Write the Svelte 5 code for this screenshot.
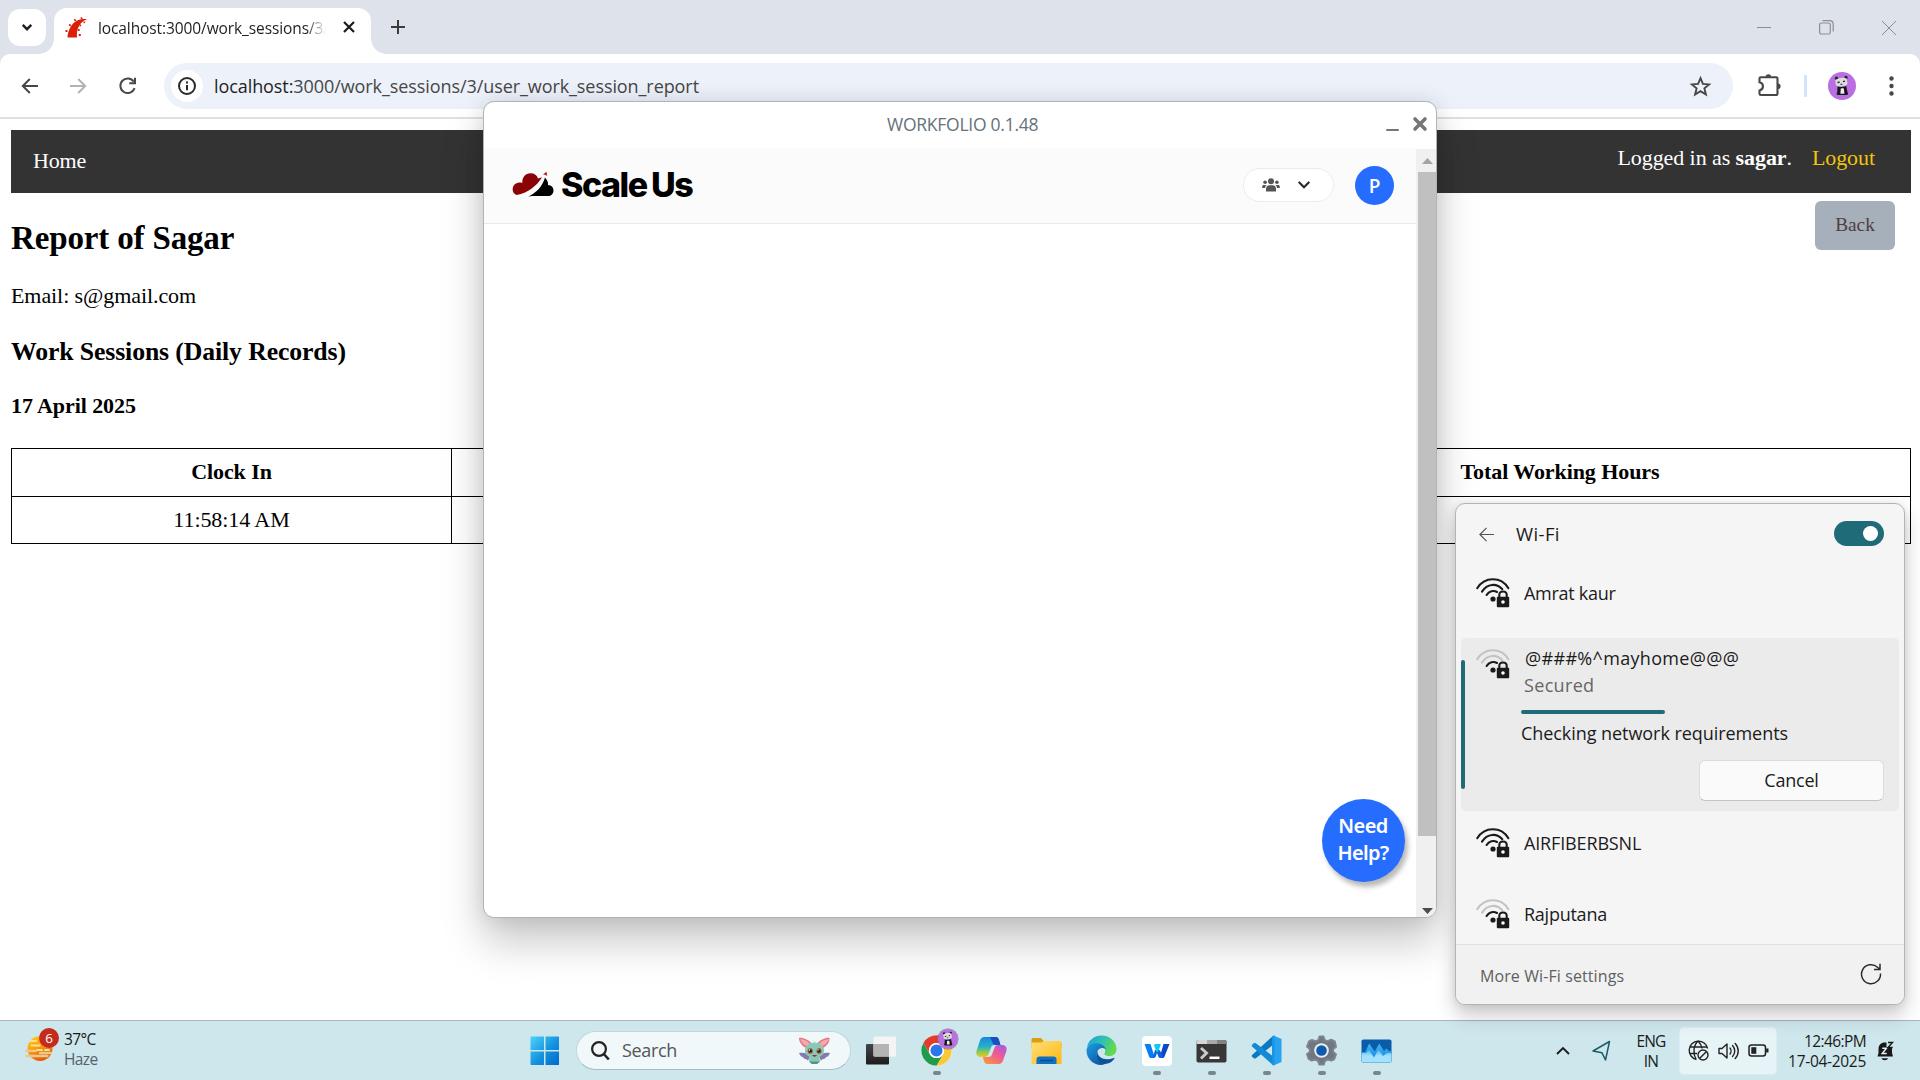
<script>
  const path = '/work_sessions/3/user_work_session_report';
  const before = [{ ssid: 'Amrat kaur', weak: false, cls: 'amrat' }];
  const after = [
    { ssid: 'AIRFIBERBSNL', weak: false, cls: 'air' },
    { ssid: 'Rajputana', weak: true, cls: 'raj' }
  ];
</script>

{#snippet wifi(weak)}
  <svg class="wifi-icon" width="34" height="31" viewBox="0 0 34 31" fill="none" stroke="#1a1a1a" stroke-width="2.1" stroke-linecap="round">
    <path d="M1.2 11.2C8.5-.5 25-.9 32.4 11.2" stroke={weak ? '#c3c3c3' : '#1a1a1a'} />
    <path d="M6 14.6C11.2 6.2 21 6 26.3 12.2" stroke={weak ? '#c3c3c3' : '#1a1a1a'} />
    <path d="M10.6 18C13 13.9 17.6 13.2 21 15" />
    <circle cx="17" cy="22" r="2.6" fill="#1a1a1a" stroke="none" />
    <path d="M23.3 21v-3c0-4.6 7.4-4.6 7.4 0v3" />
    <rect x="20.8" y="19.8" width="12.4" height="10.4" rx="1" fill="#1a1a1a" stroke="none" />
    <circle cx="27" cy="25" r="1.8" fill="#fff" stroke="none" />
  </svg>
{/snippet}

{#snippet panda(size)}
  <svg width={size} height={size} viewBox="0 0 28 28">
    <circle cx="14" cy="14" r="14" fill="#b96ee2" />
    <circle cx="8.5" cy="6.2" r="1.6" fill="#222" /><circle cx="18" cy="5.4" r="1.6" fill="#222" />
    <path d="M7.3 8.2c2.5-2.6 8.8-3.4 11.4-1.4l.8 5c-1.8 3-9.7 3.8-11.6 1.3z" fill="#ddd" />
    <path d="M9.5 10.500l2.200-.4M15 9.600l2-.5" stroke="#222" stroke-width="1.300" />
    <path d="M12.4 12.2l2 .2" stroke="#222" stroke-width="1" />
    <path d="M9.5 14.6c3 .8 6.3.5 8.7-.6l1.3 6.2c1 1 .6 2.8-1 2.8H10.2c-2 0-2-1.800-1-2.600z" fill="#181818" />
    <path d="M12.700 16.800c1-.6 2.500-.6 3.200 0l.5 5h-4z" fill="#eee" />
  </svg>
{/snippet}

<div class="screen">
  <div class="tabstrip">
    <div class="tab-search">
      <svg width="12" height="9" viewBox="0 0 14 10" fill="none" stroke="#1f1f1f" stroke-width="2.800"><path d="M2 2l5 5 5-5" /></svg>
    </div>
    <div class="tab">
      <svg class="favicon" width="23" height="21" viewBox="0 0 23 21" fill="#d91f06">
        <path d="M2.500 20.500C2.800 12.500 8 3.200 16.200 2.200c2-.2 3.600-.2 5.800.2C15.500 3.800 11 11.500 12 20.500z" />
        <rect x="0.500" y="13" width="2" height="2" /><rect x="4" y="7.300" width="2" height="1.700" transform="rotate(35 5 8)" />
        <rect x="9" y="2.200" width="2.300" height="1.600" transform="rotate(50 10 3)" /><rect x="15.500" y="0" width="2" height="1.500" transform="rotate(30 16 1)" />
        <rect x="18.500" y="4.500" width="1.600" height="1.600" /><rect x="14.500" y="7.500" width="1.600" height="1.800" /><rect x="13" y="12" width="1.600" height="2" /><rect x="13.800" y="17" width="2" height="2" />
      </svg>
      <span class="tab-title">localhost:3000/work_sessions/3/</span>
      <svg width="12" height="12" viewBox="0 0 12 12" stroke="#1b1b1b" stroke-width="2.200"><path d="M1 1l10 10M11 1L1 11" /></svg>
    </div>
    <svg class="plus" width="14" height="14" viewBox="0 0 14 14" stroke="#3c3c3c" stroke-width="2"><path d="M7 0v14M0 7h14" /></svg>
    <div class="win-controls">
      <svg width="14" height="14" viewBox="0 0 14 14" stroke="#8b8e93" fill="none"><path d="M0 6.500h14" /></svg>
      <svg width="15" height="15" viewBox="0 0 15 15" stroke="#8b8e93" fill="none" stroke-width="1.200"><rect x=".6" y="3" width="10.700" height="11" rx="1.800" /><path d="M3.500.6h7c2.200 0 3.700 1.400 3.700 3.600v7.200" /></svg>
      <svg width="14" height="14" viewBox="0 0 14 14" stroke="#8b8e93" fill="none"><path d="M0 0l14 14M14 0L0 14" /></svg>
    </div>
  </div>

  <div class="toolbar-wrap">
    <div class="toolbar">
      <svg width="17" height="16" viewBox="0 0 17 16" fill="none" stroke="#474747" stroke-width="2"><path d="M17 8H1.800M8.800 1L1.800 8l7 7" /></svg>
      <svg class="fwd" width="17" height="16" viewBox="0 0 17 16" fill="none" stroke="#b3b3b3" stroke-width="2"><path d="M0 8h15.200M8.200 1l7 7-7 7" /></svg>
      <svg class="reload" width="18" height="18" viewBox="0 0 18 18" fill="none" stroke="#474747" stroke-width="2"><path d="M15.600 11.200a7.300 7.300 0 1 1-.9-6.600M16 .8V6.200H10.300" /></svg>
      <div class="address">
        <div class="info">
          <svg width="18" height="18" viewBox="0 0 18 18" fill="none" stroke="#2a2a2a" stroke-width="2"><circle cx="9" cy="9" r="8" /><path d="M9 8v5.300M9 4.600v2" /></svg>
        </div>
        <span class="url"><span class="host">localhost:</span>3000{path}</span>
        <svg class="star" width="21" height="20" viewBox="0 0 21 20" fill="none" stroke="#474747" stroke-width="1.900"><path d="M10.500 2.200l2.400 5.700 6.200.5-4.700 4 1.500 6.100-5.400-3.300-5.400 3.300 1.500-6.100-4.700-4 6.200-.5z" /></svg>
      </div>
      <svg class="ext" width="23" height="23" viewBox="0 0 23 23" fill="none" stroke="#474747" stroke-width="2.100"><path d="M1.500 4.500c0-1 .5-1.300 1.300-1.300H18c1 0 1.500.5 1.500 1.400v14.900c0 1-.5 1.500-1.500 1.500H3c-1 0-1.500-.5-1.500-1.300v-3.200c4.600-1 4.600-7.300 0-8.300z" /><path d="M7.600 2.800a2.800 2.600 0 0 1 5.600 0zM20 9.500a2.600 2.800 0 0 1 0 5.600z" fill="#474747" stroke="none" /></svg>
      <i class="divider"></i>
      <div class="profile">{@render panda(28)}</div>
      <svg class="menu" width="5" height="20" viewBox="0 0 5 20" fill="#474747"><circle cx="2.500" cy="2.500" r="2.200" /><circle cx="2.500" cy="10" r="2.200" /><circle cx="2.500" cy="17.500" r="2.200" /></svg>
    </div>
  </div>

  <main>
    <nav>
      <span class="home">Home</span>
      <span class="who">Logged in as <b>sagar</b>.</span>
      <span class="logout">Logout</span>
    </nav>
    <div class="report">
      <div class="left">
        <h2>Report of Sagar</h2>
        <p>Email: s@gmail.com</p>
        <h3>Work Sessions (Daily Records)</h3>
        <h4>17 April 2025</h4>
      </div>
      <button class="back">Back</button>
    </div>
    <div class="table">
      <div class="cell head">Clock In</div><div class="cell head"></div><div class="cell head last">Total Working Hours</div>
      <div class="cell">11:58:14 AM</div><div class="cell"></div><div class="cell last"></div>
    </div>
  </main>

  <footer class="taskbar">
    <div class="weather">
      <div class="haze">
        <svg width="29" height="27" viewBox="0 0 29 27">
          <defs><linearGradient id="sun" x1="0" y1="0" x2=".5" y2="1"><stop offset="0" stop-color="#ffd11a" /><stop offset=".5" stop-color="#f8a013" /><stop offset="1" stop-color="#e35a08" /></linearGradient></defs>
          <circle cx="15" cy="13.500" r="12.500" fill="url(#sun)" />
          <path d="M6 6h5M6.500 10.500h8M19 10.500h6M12 15h5M20 15h4" stroke="#ffe08a" stroke-width="2" stroke-linecap="round" />
          <path d="M1 15.800h10M1.500 21h21M15 18h11" stroke="#ecc98a" stroke-width="2.300" stroke-linecap="round" />
        </svg>
        <span class="badge">6</span>
      </div>
      <div class="temp"><span>37°C</span><span class="dim">Haze</span></div>
    </div>

    <div class="apps">
      <svg width="30" height="30" viewBox="0 0 30 30">
        <defs><linearGradient id="win" x1="0" y1="0" x2="1" y2="1"><stop offset="0" stop-color="#4cd2fb" /><stop offset=".55" stop-color="#1591e0" /><stop offset="1" stop-color="#0069cb" /></linearGradient></defs>
        <path d="M1 .5h13v13.500H.500V1zM15.500.5h13l.5.5v13H15.500zM.500 15.500H14V29H1l-.5-.5zM15.500 15.500H29v13l-.5.5h-13z" fill="url(#win)" />
      </svg>
      <div class="search">
        <svg width="19" height="20" viewBox="0 0 19 20" fill="none" stroke="#222" stroke-width="2.200"><circle cx="8" cy="8" r="6.900" /><path d="M12.800 13l5 5.500" stroke-width="2.600" /></svg>
        <span>Search</span>
        <svg class="bat" width="33" height="28" viewBox="0 0 33 28">
          <path d="M1 16c4-1 8 0 11 3l-2 5c-1-3-4-1-5-4-2 0-3-2-4-4zM32 16c-4-1-8 0-11 3l2 5c1-3 4-1 5-4 2 0 3-2 4-4z" fill="#8678b0" />
          <path d="M10 12C5 10 1 6 1 .800 6 .6 11 3 14 7zM23 12c5-2 9-6 8.500-11.200C26.500.6 22 3 19 7z" fill="#e57584" />
          <path d="M10 10C6 8 3 5 2 2c4 .5 8 2 10 5zM23 10c4-2 7-5 8-8-4 .5-8 2-10 5z" fill="#f6a8ad" />
          <path d="M7 14c0-5.500 4-8.500 9.500-8.500S26 8.500 26 14c0 3-2 4.500-4.500 5.500l.5 5-3 2.500h-5l-3-2.500.5-5C9 18.500 7 17 7 14z" fill="#87c9b6" />
          <ellipse cx="12.200" cy="14" rx="2.500" ry="2.700" fill="#8c4a28" /><ellipse cx="21" cy="14" rx="2.500" ry="2.700" fill="#8c4a28" />
          <circle cx="12.500" cy="14" r="1.300" fill="#201010" /><circle cx="20.700" cy="14" r="1.300" fill="#201010" /><circle cx="11.500" cy="13" r=".7" fill="#fff" /><circle cx="20" cy="13" r=".7" fill="#fff" />
          <path d="M14.300 18h4.600c-.5 2.200-4 2.200-4.600 0z" fill="#a32c35" /><path d="M15 3l1.500 4 1.500-3 .5 3" fill="#b4e0d0" />
          <path d="M11 24.500l3 2.500h5l3-2.500" fill="#56947f" />
        </svg>
      </div>
      <svg class="taskview" width="31" height="29" viewBox="0 0 31 29">
        <defs><linearGradient id="tv" x1="0" y1="0" x2="0" y2="1"><stop offset="0" stop-color="#454545" /><stop offset="1" stop-color="#1c1c1c" /></linearGradient></defs>
        <rect x="0" y="8" width="23" height="20.500" rx="1" fill="url(#tv)" /><rect x="7.500" y=".5" width="22.500" height="20" rx="1" fill="#f4f4f4" /><path d="M7.500 8H23v12.500H8.500l-1-1z" fill="#b4b4b4" />
      </svg>
      <div class="app run">
        <svg width="31" height="31" viewBox="0 0 48 48">
          <circle cx="24" cy="24" r="23.500" fill="#fff" />
          <path d="M3.650 12.250A23.500 23.500 0 0 1 44.350 12.250H24A11.750 11.750 0 0 0 13.820 29.870z" fill="#e33b2e" />
          <path d="M44.350 12.250A23.500 23.500 0 0 1 24 47.500L34.180 29.870A11.750 11.750 0 0 0 24 12.250z" fill="#fcc934" />
          <path d="M24 47.500A23.500 23.500 0 0 1 3.650 12.250L13.820 29.870A11.750 11.750 0 0 0 34.180 29.870z" fill="#209a4b" />
          <circle cx="24" cy="24" r="11.800" fill="#fff" /><circle cx="24" cy="24" r="9.300" fill="#2b76e8" />
        </svg>
        <span class="mini">{@render panda(20)}</span>
      </div>
      <div class="app">
        <svg width="31" height="29" viewBox="0 0 31 29">
          <defs>
            <linearGradient id="cpa" x1="0" y1="0" x2="0" y2="1"><stop offset="0" stop-color="#1b86dc" /><stop offset=".5" stop-color="#27b3c6" /><stop offset=".75" stop-color="#8fc94e" /><stop offset="1" stop-color="#f2c820" /></linearGradient>
            <linearGradient id="cpb" x1="1" y1="0" x2=".2" y2="1"><stop offset="0" stop-color="#a058ee" /><stop offset=".5" stop-color="#ec5b95" /><stop offset="1" stop-color="#fb9440" /></linearGradient>
          </defs>
          <path d="M8.500 1h11c2.200 0 3 1 3.500 3l1.500 5h-6c-2 0-3 1-3.500 2.800L12.500 18c-.6 2-1.500 3-4 3H5c-3.500 0-5.500-2.500-4.500-6L3.800 5C4.600 2.200 6 1 8.500 1z" fill="url(#cpa)" />
          <path d="M14 1h5.500c2.200 0 3 1 3.500 3l1.500 5h-5c-2 0-2.600-1-3.200-3z" fill="#174fc7" />
          <path d="M22.500 28h-11c-2.200 0-3-1-3.500-3l-1.200-4h5.700c2 0 3-1 3.500-2.800l2.500-6.400c.6-2 1.500-2.800 4-2.800H26c3.500 0 5.300 2.500 4.400 6L27.200 24c-.8 2.800-2.200 4-4.700 4z" fill="url(#cpb)" />
        </svg>
      </div>
      <div class="app">
        <svg width="31" height="28" viewBox="0 0 31 28">
          <defs><linearGradient id="fold" x1="0" y1="0" x2="1" y2="1"><stop offset="0" stop-color="#ffe07a" /><stop offset="1" stop-color="#fdb710" /></linearGradient></defs>
          <path d="M.500 2.500Q.500 1 2 1h8l3 3.500h16Q30.500 4.500 30.500 6v5H.500z" fill="#de9d0b" /><path d="M.500 5.500h10l2.500-1.500h16q1.500 0 1.500 1.500V27H.500z" fill="url(#fold)" />
          <path d="M5.500 27v-4.500q0-3 3-3h14q3 0 3 3V27z" fill="#0f6fc0" /><path d="M9 23.500h13" stroke="#0a4a86" stroke-width="1.300" />
        </svg>
      </div>
      <div class="app">
        <svg width="31" height="31" viewBox="0 0 31 31">
          <defs>
            <linearGradient id="edg" x1="0" y1="0" x2="1" y2=".4"><stop offset="0" stop-color="#1f9ee0" /><stop offset=".55" stop-color="#2fc1b4" /><stop offset="1" stop-color="#62d94f" /></linearGradient>
            <linearGradient id="edb" x1="0" y1="0" x2=".8" y2="1"><stop offset="0" stop-color="#1da0e2" /><stop offset="1" stop-color="#0c4f9e" /></linearGradient>
          </defs>
          <path d="M1 12C2.500 5 8.500.500 15.500.500 24 .500 30.500 6.500 30.500 14c0 4.500-3.300 7-7 7-3.600 0-5.500-1.300-5-2.500 2-3.500.5-8-5-9C8.500 8.700 3.500 9.500 1 12z" fill="url(#edg)" />
          <path d="M.500 15.500C.700 10.500 5.500 8.200 10.500 8.200c6 0 9.500 4 9.500 7.300 0-2.500-6-4.500-8.500.5-2.800 6 2.500 12 9.500 11.500-1.500 1.500-3.500 2.500-6 2.500C7 30 .5 23.500.5 15.500z" fill="url(#edb)" />
          <path d="M11.500 16c-2.500 5.500 1.500 13.500 9 12.800 4-.5 6.800-3.300 8-5.300.3-.6-.2-.9-.8-.6C20 26 11 23.500 11.500 16z" fill="#0b5299" />
        </svg>
      </div>
      <div class="app run">
        <svg width="30" height="30" viewBox="0 0 30 30">
          <rect width="30" height="30" rx="4" fill="#fff" /><path d="M2.500 8h6l4 12.500q-.5 1.500-2 1.500h-1.500q-1.500 0-2-1.500z" fill="#087ff0" /><path d="M27.500 8h-6l-4 14h3q1.500 0 2-1.500z" fill="#0949c8" /><path d="M13 14h4.500l3.500 6q-.5 2-2 2h-.8q-1.200 0-1.700-1.200L15 17l-1.500 4q-.6 1-1.700 1h-1z" fill="#0a64e2" /><path d="M11.500 8q1 1 2 0h4.500q1 0 .6 1.200L16 16h-1.500z" fill="#12c7f6" />
        </svg>
      </div>
      <div class="app run">
        <svg width="31" height="24" viewBox="0 0 31 24">
          <rect x=".5" y="1" width="30" height="22.500" rx="1.800" fill="#373737" /><path d="M.500 2.800Q.500 1 2.300 1H11v4H.500z" fill="#d6d6d6" /><path d="M11 1h10v4H11z" fill="#a9a9a9" /><path d="M21 1h7.700q1.800 0 1.800 1.800V5H21z" fill="#828282" />
          <path d="M5 9l5.500 5L5 19.500" fill="none" stroke="#c9c9c9" stroke-width="3" /><path d="M13.500 18.800h10" stroke="#fff" stroke-width="2.500" />
        </svg>
      </div>
      <div class="app run">
        <svg width="31" height="31" viewBox="0 0 31 31">
          <path d="M22.500.500L30.500 4v23l-8 3.500z" fill="#25a3f1" /><path d="M22.500.500v9L4.500 23.500H3l-2.200-2v-1.200z" fill="#0b78c4" /><path d="M22.500 30.500v-9L4.500 8H3L.800 10v1.200z" fill="#118bd8" /><path d="M21 1.500l2.500-1v30l-2.500-1z" fill="#1c93df" />
        </svg>
      </div>
      <div class="app run">
        <svg width="31" height="31" viewBox="0 0 31 31">
          <path d="M12.500 5l1-3.500h4l1 3.500 2.800 1.400 3.900-1.700 3.500 1.600L30 12l-2.800 2v3l2.800 2.200-1.700 4.800-3 1.500-3.700-1-2.800 1.500-1 3.500h-4.600l-1-3.500-2.800-1.500-4 1-2.700-1.500L1 19l2.800-2v-3L1 11.500l2-5L6 5l3.700 1.400z" fill="#6f7780" stroke="#7d858e" stroke-width="2" stroke-linejoin="round" />
          <circle cx="15.500" cy="15.500" r="7.300" fill="#e9edf0" /><circle cx="15.500" cy="15.500" r="5.300" fill="#0b5cae" />
        </svg>
      </div>
      <div class="app run">
        <svg width="31" height="24" viewBox="0 0 31 24">
          <defs>
            <linearGradient id="tm" x1="0" y1="0" x2="0" y2="1"><stop offset="0" stop-color="#4aaeef" /><stop offset=".5" stop-color="#a4e1fd" /></linearGradient>
            <linearGradient id="tmw" x1="0" y1="0" x2="0" y2="1"><stop offset="0" stop-color="#3fb6f5" /><stop offset="1" stop-color="#1280d6" /></linearGradient>
          </defs>
          <rect x=".5" y=".5" width="30" height="23" rx="1.800" fill="#0a5ba8" />
          <path d="M.500 13h3.700l4-8.500 5.500 8 4.500-8L23 12l2.500-2.500L28 12h2.500v9.500q0 2-2 2H2.500q-2 0-2-2z" fill="url(#tmw)" />
          <path d="M.500 14h4.500L8 11l5 7.500 4.500-8L22 17l4-3h4.500v7.500q0 2-2 2H2.500q-2 0-2-2z" fill="url(#tm)" />
        </svg>
      </div>
    </div>

    <div class="tray">
      <svg class="up" width="14" height="9" viewBox="0 0 14 9" fill="none" stroke="#1b1b1b" stroke-width="1.900"><path d="M1 8l6-6 6 6" /></svg>
      <svg class="loc" width="19" height="21" viewBox="0 0 19 21" fill="none" stroke="#1b5c68" stroke-width="1.500" stroke-linejoin="round"><path d="M17.500 1.500L1 11l9 1.800 3.500 7.200z" /></svg>
      <div class="lang"><span>ENG</span><span>IN</span></div>
      <div class="quick">
        <svg width="21" height="21" viewBox="0 0 21 21" fill="none" stroke="#222" stroke-width="1.400"><path d="M8.500 19.500A9.300 9.300 0 1 1 19.600 8.500M1.500 7h18M1.500 13.500h7.500M8 19C5 14 5 6 10 1c2.500 2.500 3.800 5 4 7.500" /><circle cx="15" cy="15" r="5" /><path d="M11.500 18.500l7-7" /></svg>
        <svg width="21" height="18" viewBox="0 0 21 18" fill="none" stroke="#222" stroke-width="1.400" stroke-linejoin="round"><path d="M1 6.500h3L9 2v14l-5-4.500H1z" /><path d="M12 6c1.300 1.600 1.300 4.400 0 6M14.500 3.500c3 3.200 3 7.800 0 11M17.200 1.500c4 4.200 4 10.800 0 15" stroke-linecap="round" /></svg>
        <svg width="21" height="13" viewBox="0 0 21 13" fill="none" stroke="#222" stroke-width="1.500"><rect x="1" y="1" width="16.500" height="11" rx="2.500" /><rect x="3.300" y="3.200" width="5" height="6.600" fill="#222" stroke="none" /><path d="M19.300 4.500v4" stroke-width="2.400" /></svg>
      </div>
      <div class="clock"><span class="time">12:46:PM</span><span>17-04-2025</span></div>
      <svg class="bell" width="18" height="20" viewBox="0 0 18 20">
        <path d="M1.500 15.500L2.500 12V8c0-4 2.500-6.500 6.500-6.500h1.500V6h5.500v6l1 3.500z" fill="#181818" /><path d="M5.500 17.300h6.500c-.5 2.500-6 2.500-6.500 0z" fill="#181818" />
        <path d="M6.300 7.200h4.200l-4.200 5.200h4.400" fill="none" stroke="#e8f4f7" stroke-width="1.500" /><path d="M12 1.500h4.500L12 6.500h4.700" fill="none" stroke="#181818" stroke-width="1.400" />
      </svg>
    </div>
  </footer>

  <section class="window">
    <header class="titlebar">
      <span class="title">WORKFOLIO 0.1.48</span>
      <svg class="min" width="13" height="2" viewBox="0 0 13 2"><rect width="13" height="2" rx="1" fill="#777" /></svg>
      <svg class="close" width="14" height="14" viewBox="0 0 14 14" stroke="#757575" stroke-width="3.600" stroke-linecap="round"><path d="M2 2l10 10M12 2L2 12" /></svg>
    </header>
    <div class="window-body">
      <div class="content">
        <div class="brandbar">
          <svg class="cloud" width="42" height="28" viewBox="0 0 42 28">
            <path d="M4.500 24C-.500 22.500-.700 14.500 4.500 12.300c1.700-1 3.500-.8 5.800-.3C10 6.500 13.500 2.300 18.500 2.300c4 0 6.500 2 7.500 5.200l4-1.300C25 14.500 17 21.500 4.500 24z" fill="#8c0306" /><path d="M31 3.500l3.500-2.700.7 4.200-2-1.200z" fill="#b3121b" />
            <path d="M14 26.800C24 22.500 30.500 15.500 33 6.500c1.500 1.800 3.500 4.300 3 7.500 3.500.3 5.500 2.500 5.500 5.500 0 3.500-2.500 5.500-5.500 5.500H20c-2 0-4 .8-6 1.800z" fill="#000" />
          </svg>
          <span class="brand">Scale Us</span>
          <div class="team">
            <svg width="18" height="14" viewBox="0 0 18 14" fill="#555"><circle cx="9" cy="3.300" r="3" /><circle cx="3.100" cy="4.200" r="1.800" /><circle cx="14.900" cy="4.200" r="1.800" /><path d="M4 13.500v-2.700C4 8.500 5.500 7.300 7.300 7.300h3.400c1.800 0 3.300 1.200 3.300 3.500v2.700zM.200 10V8.800C.2 7.500 1 7 2 7h2.500C3.500 8 3 9 3 10zM17.800 10V8.800C17.800 7.500 17 7 16 7h-2.500c1 1 1.500 2 1.500 3z" /></svg>
            <svg width="12" height="8" viewBox="0 0 12 8" fill="none" stroke="#2b2b2b" stroke-width="2.200" stroke-linecap="round"><path d="M1.300 1.500L6 6.200l4.700-4.700" /></svg>
          </div>
          <span class="avatar">P</span>
        </div>
      </div>
      <div class="scrollbar">
        <svg width="11" height="6" viewBox="0 0 11 6"><path d="M0 6L5.500 0 11 6z" fill="#a3a3a3" /></svg>
        <i class="thumb"></i>
        <svg class="down" width="11" height="6" viewBox="0 0 11 6"><path d="M0 0l5.500 6L11 0z" fill="#4d4d4d" /></svg>
      </div>
    </div>
    <div class="help"><span>Need</span><span>Help?</span></div>
  </section>

  <aside class="flyout">
    <div class="fly-head">
      <svg width="15" height="15" viewBox="0 0 15 15" fill="none" stroke="#555" stroke-width="1.200"><path d="M15 7.500H1M7.500.800L.900 7.500l6.600 6.700" /></svg>
      <span>Wi-Fi</span>
      <i class="toggle"></i>
    </div>
    {#each before as n}
      <div class="net">{@render wifi(n.weak)}<span class={n.cls}>{n.ssid}</span></div>
    {/each}
    <div class="active">
      <i class="accent"></i>
      <div class="row">{@render wifi(true)}<div class="names"><span>@###%^mayhome@@@</span><span class="sec">Secured</span></div></div>
      <i class="progress"></i>
      <span class="status">Checking network requirements</span>
      <button class="cancel">Cancel</button>
    </div>
    {#each after as n}
      <div class="net {n.cls}-row">{@render wifi(n.weak)}<span class={n.cls}>{n.ssid}</span></div>
    {/each}
    <div class="fly-foot">
      <span>More Wi-Fi settings</span>
      <svg width="22" height="22" viewBox="0 0 22 22" fill="none" stroke="#2b2b2b" stroke-width="1.500"><path d="M20.500 10.500A9.500 9.500 0 1 1 17.500 4.200L20 6.300M20 .800v5.700h-6" /></svg>
    </div>
  </aside>
</div>

<style>
  :global(body) { margin: 0; background: #fff; }
  * { box-sizing: border-box; }
  svg { display: block; flex: none; overflow: visible; }
  i { display: block; flex: none; }
  span { white-space: nowrap; }
  .screen { position: relative; width: 1920px; height: 1080px; overflow: hidden; display: flex; flex-direction: column; background: #fff; font-family: "Open Sans", "Noto Sans", sans-serif; }

  .tabstrip { height: 54px; flex: none; background: #dee2ea; display: flex; align-items: flex-start; padding-left: 8px; }
  .tab-search { margin-top: 9px; width: 38px; height: 37px; border-radius: 12px; background: #fff; display: flex; align-items: center; justify-content: center; }
  .tab { position: relative; margin: 8px 0 0 8px; width: 317px; height: 46px; background: #fff; border-radius: 13px 13px 0 0; display: flex; align-items: center; padding: 0 16px 8px 11px; }
  .tab::before, .tab::after { content: ""; position: absolute; bottom: 0; width: 15px; height: 15px; }
  .tab::before { left: -15px; background: radial-gradient(circle at 0 0, transparent 14.500px, #fff 15px); }
  .tab::after { right: -15px; background: radial-gradient(circle at 100% 0, transparent 14.500px, #fff 15px); }
  .favicon { margin-right: 10px; }
  .tab-title { width: 229px; margin-right: 16px; font-size: 15.500px; letter-spacing: -0.100px; line-height: 24px; padding-top: 1px; color: #1f1f1f; -webkit-mask-image: linear-gradient(90deg, #000 208px, transparent 228px); mask-image: linear-gradient(90deg, #000 208px, transparent 228px); }
  .plus { margin: 20px 0 0 20px; }
  .win-controls { margin-left: auto; display: flex; align-items: center; gap: 48px; padding: 20px 24px 0 0; }

  .toolbar-wrap { flex: none; height: 65px; background: #dee2ea; border-bottom: 2px solid #e0e0e0; }
  .toolbar { height: 63px; background: #fff; border-radius: 10px 10px 0 0; display: flex; align-items: center; padding: 1px 0 0 21px; }
  .fwd { margin-left: 32px; }
  .reload { margin-left: 32px; }
  .address { margin: 0 0 0 27px; width: 1569px; height: 46px; border-radius: 23px; background: #ecf1fa; display: flex; align-items: center; padding: 0 22px 0 7px; }
  .info { width: 32px; height: 32px; border-radius: 50%; background: #fff; display: flex; align-items: center; justify-content: center; }
  .url { margin-left: 11px; font-size: 18px; letter-spacing: -0.080px; color: #474747; line-height: 26px; }
  .host { color: #1f1f1f; }
  .star { margin-left: auto; }
  .ext { margin-left: 25px; margin-top: -2px; }
  .divider { width: 3px; height: 22px; background: #d3e3fd; margin-left: 23px; border-radius: 1px; }
  .profile { margin-left: 21px; }
  .menu { margin-left: 33px; }

  main { flex: 1; padding: 11px 9px 0 11px; font-family: "Liberation Serif", "Times New Roman", serif; font-size: 22px; letter-spacing: -0.080px; color: #000; }
  nav { height: 63px; background: #333; color: #fff; display: flex; line-height: 26px; padding: 17px 36px 0 22px; }
  .home { margin-top: 1px; letter-spacing: -0.200px; }
  .who { margin-left: auto; margin-top: -2px; }
  .logout { color: #f1c40f; margin: -2px 0 0 20px; }
  .report { display: flex; justify-content: space-between; height: 255px; }
  h2, h3, h4, p { margin: 0; }
  h2 { margin-top: 26px; font-size: 33px; line-height: 38px; letter-spacing: -0.150px; }
  p { margin-top: 26px; line-height: 25px; }
  h3 { margin-top: 29px; font-size: 25.740px; line-height: 30px; letter-spacing: -0.110px; }
  h4 { margin-top: 26px; font-size: 22px; line-height: 25px; }
  .back { margin: 8px 16px 0 0; width: 80px; height: 49px; border: 0; border-radius: 6px; background: #a5b0bb; color: #4f3f3f; font: 19.250px "Liberation Serif", serif; padding: 0 0 1px; }
  .table { display: grid; grid-template-columns: 440px 756px 703px; grid-template-rows: 48px 47px; border: solid #000; border-width: 1px 0 0 1px; width: 1900px; }
  .cell { border: solid #000; border-width: 0 1px 1px 0; display: flex; align-items: center; justify-content: center; }
  .head { font-weight: 700; padding-bottom: 2px; }
  .last { padding-left: 2px; }

  .taskbar { height: 60px; flex: none; background: #cee7ed; border-top: 1px solid #a9b5bf; display: grid; grid-template-columns: 530px 1fr auto; }
  .weather { display: flex; padding: 14px 0 0 25px; font-size: 15.500px; }
  .haze { position: relative; width: 29px; height: 27px; }
  .badge { position: absolute; left: 14px; top: -7px; width: 20px; height: 20px; border-radius: 50%; background: #c42b1c; color: #fff; font-size: 13.500px; line-height: 20px; text-align: center; }
  .temp { display: flex; flex-direction: column; margin: -6px 0 0 10px; line-height: 20px; color: #1b1b1b; letter-spacing: -0.600px; }
  .dim { color: #53636a; letter-spacing: -0.600px; }
  .apps { display: flex; align-items: center; padding-bottom: 1px; }
  .search { margin-left: 16px; width: 275px; height: 39px; border-radius: 20px; background: #f0f8fa; border: 1px solid #c2d6dc; border-bottom-color: #a9bbc4; display: flex; align-items: center; padding: 0 19px 0 14px; color: #555; font-size: 18px; letter-spacing: -0.350px; }
  .search span { margin-left: 12px; margin-top: -1px; }
  .bat { margin-left: auto; }
  .taskview { margin: 0 24px 0 15px; }
  .app { position: relative; width: 31px; height: 59px; display: flex; align-items: center; justify-content: center; margin-right: 24px; }
  .run::after { content: ""; position: absolute; left: 12px; top: 50px; width: 8px; height: 4px; border-radius: 2px; background: #78868a; }
  .mini { position: absolute; left: 17px; top: 8px; border-radius: 50%; box-shadow: 0 0 0 0.500px #777; }
  .tray { display: flex; align-items: center; padding-right: 26px; color: #1b1b1b; font-size: 15.500px; line-height: 20px; letter-spacing: -0.600px; padding-bottom: 1px; }
  .loc { margin-left: 22px; }
  .lang { width: 40px; margin-left: 20px; display: flex; flex-direction: column; align-items: center; letter-spacing: -0.800px; }
  .quick { margin-left: 8px; width: 98px; height: 48px; border-radius: 5px; background: #e6f3f7; border: 1px solid #ddebf0; display: flex; align-items: center; justify-content: center; gap: 9px; }
  .clock { width: 89px; display: flex; flex-direction: column; align-items: flex-end; letter-spacing: -0.300px; }
  .time { letter-spacing: -0.600px; }
  .bell { margin-left: 10px; }

  .window { position: absolute; left: 483px; top: 101px; width: 954px; height: 817px; border: 1px solid #b0b3b8; border-radius: 11px; background: #fff; box-shadow: 0 24px 42px rgba(0, 0, 0, 0.220), 0 0 20px rgba(0, 0, 0, 0.100); display: flex; flex-direction: column; }
  .titlebar { height: 46px; flex: none; display: flex; align-items: center; padding-right: 9px; }
  .title { margin-left: 403px; font-size: 17.500px; letter-spacing: -0.250px; color: #65717b; font-weight: 500; line-height: 24px; padding-bottom: 3px; }
  .min { margin: 9px 14px 0 auto; }
  .close { margin-top: -2px; }
  .window-body { flex: 1; display: flex; overflow: hidden; border-radius: 0 0 10px 10px; }
  .content { flex: 1; }
  .brandbar { height: 76px; background: #fbfbfb; border-bottom: 1px solid #e9e9e9; display: flex; align-items: center; padding: 0 22px 1px 28px; }
  .brand { margin-left: 7px; font: 800 34px/40px Inter, sans-serif; letter-spacing: -1.500px; word-spacing: -1.500px; color: #000; }
  .team { margin-left: auto; width: 91px; height: 34px; border: 1px solid #ebebeb; border-radius: 17px; background: #fff; display: flex; align-items: center; gap: 18px; padding-left: 18px; }
  .avatar { margin: 1px 0 0 21px; width: 39px; height: 39px; border-radius: 50%; background: #266dff; color: #fff; font-size: 19px; font-weight: 600; line-height: 41px; text-align: center; }
  .scrollbar { width: 20px; margin-top: 1px; background: #f0f0f0; display: flex; flex-direction: column; align-items: center; padding: 9px 0 8px 2px; }
  .thumb { width: 18px; height: 664px; margin-top: 8px; background: #c0c0c0; }
  .down { margin-top: auto; margin-bottom: -5px; }
  .help { position: absolute; left: 837.500px; top: 697px; width: 83px; height: 83px; border-radius: 50%; background: #266dff; box-shadow: 3px 5px 5px rgba(0, 0, 0, 0.280); color: #fff; display: flex; flex-direction: column; align-items: center; justify-content: center; font: 600 20px/27px "Noto Sans", sans-serif; letter-spacing: -0.600px; padding-bottom: 3px; }

  .flyout { position: absolute; left: 1455px; top: 503px; width: 450px; height: 502px; border: 1px solid #b4b4b4; border-radius: 10px; background: #f5f5f5; box-shadow: 0 10px 20px rgba(0, 0, 0, 0.220), 0 0 8px rgba(0, 0, 0, 0.080); display: flex; flex-direction: column; font-size: 18px; line-height: 26px; color: #1b1b1b; overflow: hidden; }
  .fly-head { height: 60px; flex: none; display: flex; align-items: center; padding: 0 20px 0 23px; }
  .fly-head span { margin-left: 22px; font-size: 18.500px; letter-spacing: 0.400px; }
  .toggle { margin: -2px 0 0 auto; width: 50px; height: 25px; border-radius: 13px; background: #1f6b78; position: relative; }
  .toggle::after { content: ""; position: absolute; right: 6px; top: 5px; width: 15px; height: 15px; border-radius: 50%; background: #fff; }
  .net { height: 74px; flex: none; display: flex; align-items: flex-start; padding: 13px 0 0 20px; }
  .net span { margin-left: 14px; margin-top: 3px; }
  .amrat { letter-spacing: -0.280px; }
  .air { letter-spacing: -0.150px; }
  .raj { letter-spacing: -0.250px; }
  .active { position: relative; margin: 0 5px; height: 173px; flex: none; border-radius: 5px; background: #ebebeb; display: flex; flex-direction: column; align-items: flex-start; }
  .accent { position: absolute; left: 0; top: 22px; width: 4px; height: 129px; border-radius: 2px; background: #1f6b78; }
  .row { display: flex; padding: 10px 0 0 15px; }
  .names { margin: -3px 0 0 15px; display: flex; flex-direction: column; line-height: 27px; letter-spacing: 0.330px; }
  .sec { color: #666; margin-left: -1px; }
  .progress { margin: 11px 0 0 60px; width: 144px; height: 4px; border-radius: 2px; background: #1f6b78; }
  .status { margin: 6px 0 0 60px; line-height: 26px; letter-spacing: -0.060px; }
  .cancel { margin: auto 15px 10px auto; width: 185px; height: 41px; border: 1px solid #dcdcdc; border-bottom-color: #c4c4c4; border-radius: 6px; background: #fafafa; font: 18px "Open Sans", sans-serif; letter-spacing: -0.200px; color: #1b1b1b; padding: 0 0 2px; }
  .air-row { height: 71px; padding-top: 16px; }
  .raj-row { height: 62px; padding-top: 16px; }
  .fly-foot { flex: 1; background: #f1f1f1; border-top: 1px solid #e0e0e0; display: flex; align-items: flex-start; justify-content: space-between; padding: 18px 22px 0 24px; font-size: 16px; letter-spacing: 0.100px; color: #606060; }
</style>
